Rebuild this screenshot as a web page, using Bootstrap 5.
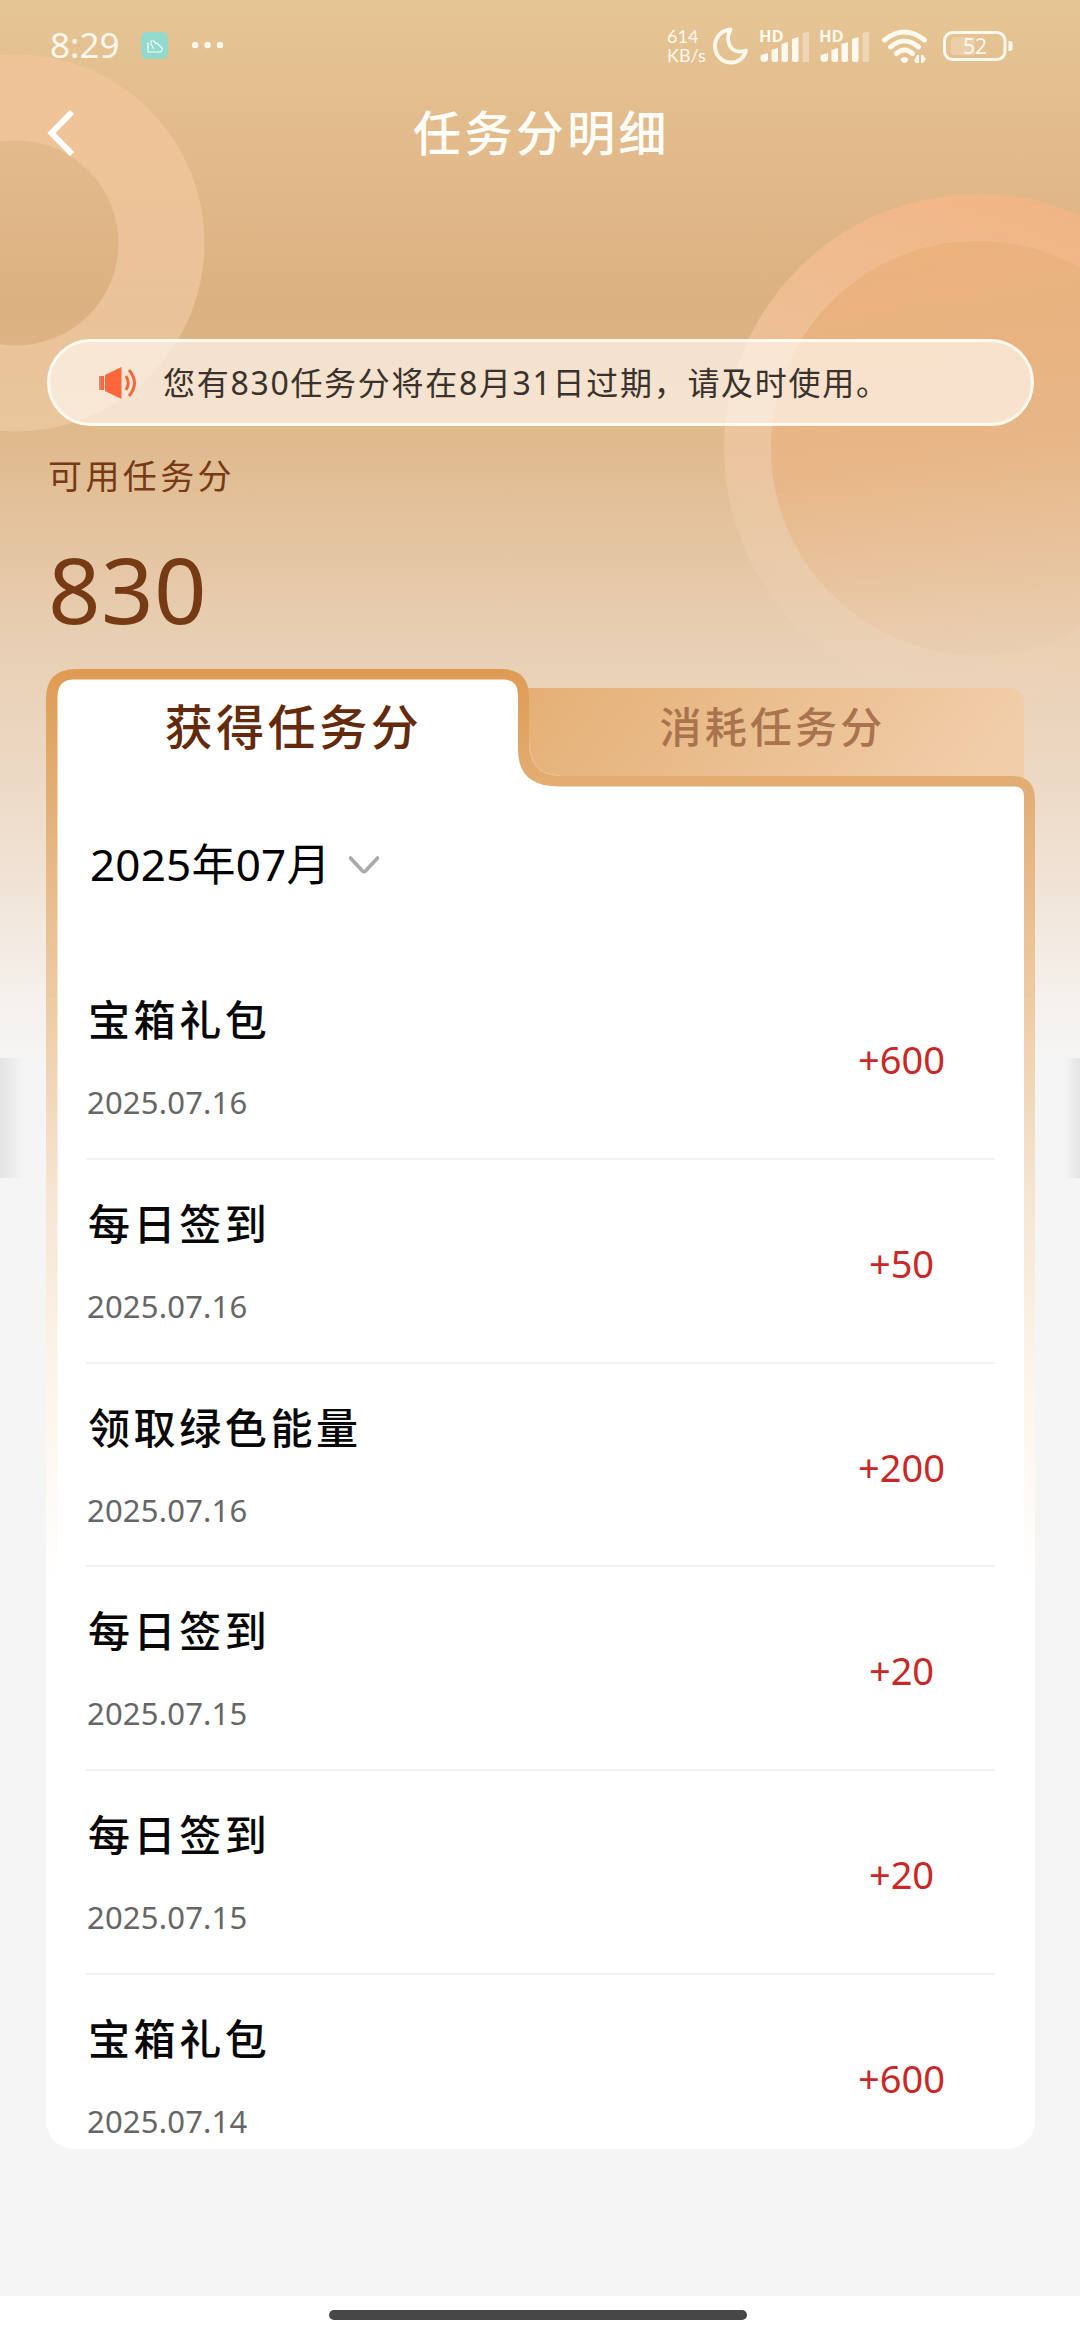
<!DOCTYPE html>
<html lang="zh-CN">
<head>
<meta charset="utf-8">
<meta name="viewport" content="width=device-width, initial-scale=1">
<title>任务分明细</title>
<link href="https://cdn.jsdelivr.net/npm/bootstrap@5.3.0/dist/css/bootstrap.min.css" rel="stylesheet">
<style>
body{font-family:"Noto Sans","Noto Sans CJK SC",sans-serif;background:#f5f5f5;width:1080px;height:2340px;overflow:hidden}
.screen{width:1080px;height:2340px;background:linear-gradient(180deg,#e6c595 0,#e2ba8b 150px,#dcb182 310px,#e0b98c 430px,#e4c4a0 540px,#e8cfb4 640px,#ebd6bf 740px,#f0e2d4 870px,#f5f0eb 990px,#f5f5f5 1060px)}
.decor{left:0;top:0;z-index:0}
.layer{z-index:1}
.statusbar{height:90px;padding:0 67px 0 50px;color:#fff9ee}
.clock{font-size:35px;line-height:90px;width:91px}
.netspeed{font-family:Lato,sans-serif;font-size:18px;line-height:19px;width:46px;padding-top:2px}
.titlebar{height:86px;padding-left:46px}
.titlebar h1{font-size:48px;letter-spacing:3.4px;line-height:60px;color:#fffdf8;font-weight:500;padding-right:73px}
.notice{margin:163px 46px 0 47px;height:87px;border:3.5px solid #fffaf0;border-radius:44px;background:rgba(255,248,240,.68);padding-left:49px;color:#3a322c;font-size:32px;letter-spacing:1.7px}
.notice span{margin-left:26px}
.points{padding-left:48px;color:#763a15;height:243px}
.points-label{font-size:34px;letter-spacing:3.4px;line-height:50px;padding-top:25px}
.points-value{font-size:92px;line-height:100px;margin-top:38px;letter-spacing:.4px}
.folder{margin:0 45px 0 46px;height:1480px;border-radius:0 0 28px 28px;overflow:hidden}
.folder-shape{left:0;top:0}
.tabs{height:115px}
.tabs button{background:none;border:0;padding:0;line-height:60px}
.tabs .tab-on{width:483px;font-size:48px;letter-spacing:3.5px;color:#632b0b;font-weight:500;padding-left:12px}
.tabs .tab-off{width:495px;font-size:42px;letter-spacing:3.2px;color:#a9744d;font-weight:500;padding-right:8px}
.month{height:172px;padding:50px 0 0 44px;font-size:44px;line-height:60px;color:#000;letter-spacing:.2px}
.entry{margin:0 40px;height:203.75px;border-bottom:2px solid #f2f2f2}
.entry:last-child{border:0}
.entry-name{font-size:42px;line-height:60px;letter-spacing:3.6px;color:#080808;font-weight:500;padding-top:34px;margin-left:2px}
.entry-date{font-size:31px;line-height:44px;color:#666;margin-top:30px;letter-spacing:.2px;margin-left:1px}
.entry-amount{width:187px;font-size:38px;line-height:60px;color:#ca2727;padding-top:73px}
.edge{top:1058px;height:120px;width:24px;z-index:1}
.edge-l{left:0;background:linear-gradient(90deg,#e4e4e4,rgba(245,245,245,0))}
.edge-r{right:0;width:16px;background:linear-gradient(270deg,#e4e4e4,rgba(245,245,245,0))}
.homebar{height:44px;padding-right:5px}
.homebar i{width:418px;height:10px;border-radius:5px;background:#474747;margin-top:14px}
</style>
<script src="https://cdn.jsdelivr.net/npm/bootstrap@5.3.0/dist/js/bootstrap.bundle.min.js"></script>
</head>
<body>
<div class="screen position-relative d-flex flex-column">
  <svg class="decor position-absolute" width="1080" height="720" viewBox="0 0 1080 720">
    <defs>
      <linearGradient id="ringL" x1="0" y1="0" x2="0" y2="1"><stop offset="0" stop-color="#f3c59b" stop-opacity=".75"/><stop offset="1" stop-color="#f1cfa8" stop-opacity=".6"/></linearGradient>
      <linearGradient id="ringR" gradientUnits="userSpaceOnUse" x1="1040" y1="200" x2="880" y2="700"><stop offset="0" stop-color="#f5b583" stop-opacity=".8"/><stop offset=".5" stop-color="#f4c8a4" stop-opacity=".7"/><stop offset="1" stop-color="#efd6ba" stop-opacity=".2"/></linearGradient>
      <linearGradient id="discR" gradientUnits="userSpaceOnUse" x1="930" y1="242" x2="1010" y2="660"><stop offset="0" stop-color="#edb27c" stop-opacity=".85"/><stop offset=".5" stop-color="#ebb584" stop-opacity=".7"/><stop offset="1" stop-color="#efc8a2" stop-opacity=".15"/></linearGradient>
    </defs>
    <circle cx="16" cy="243" r="145.5" fill="none" stroke="url(#ringL)" stroke-width="86"/>
    <circle cx="978" cy="448" r="230.5" fill="none" stroke="url(#ringR)" stroke-width="47"/>
    <circle cx="978" cy="448" r="207" fill="url(#discR)"/>
  </svg>

  <header class="layer position-relative">
    <div class="statusbar d-flex align-items-center">
      <span class="clock">8:29</span>
      <svg width="27" height="27" viewBox="0 0 27 27"><rect width="27" height="27" rx="6" fill="#93d9cd"/><path d="M7 20V13M7 20H19Q23 18 20 15L16 11L14 12M10 13V9H14M10 12L13 17M6 11L8 13M6 15H8M13 9L15 12" fill="none" stroke="#f2fff8" stroke-width="1.1"/></svg>
      <svg class="ms-4" width="32" height="8" viewBox="0 0 32 8" fill="#fff9ee"><circle cx="3.2" cy="4" r="3.2"/><circle cx="15.5" cy="4" r="3.2"/><circle cx="28" cy="4" r="3.2"/></svg>
      <div class="d-flex align-items-center ms-auto">
        <div class="netspeed"><div>614</div><div>KB/s</div></div>
        <svg width="300" height="44" viewBox="0 0 300 44" fill="none">
          <path d="M17.500 6.500C6 7.500 1.500 17 2 24C3 34 10 39.500 18 39.500C26 39.500 31.500 34 33 27.500C25 30 19 27.500 16.500 22C14.500 17 14.500 11.500 17.500 6.500Z" stroke="#fff9ee" stroke-width="3.800" stroke-linejoin="round"/>
          <g id="cell" fill="#fff9ee">
            <text x="46" y="19" font-family="Open Sans" font-size="16.500" font-weight="700">HD</text>
            <path d="M48 32L55 30V36Q55 39 51 39Q46 39 48 32ZM58.500 27L65 25V37Q65 39 62 39Q58.500 39 58.500 37ZM68.500 21L75 19V37Q75 39 72 39Q68.500 39 68.500 37ZM79 16L85.500 14V37Q85.500 39 82.500 39Q79 39 79 37Z"/>
            <path d="M89.500 10L96 8.500V39H89.500Z" opacity=".38"/>
          </g>
          <use href="#cell" x="60"/>
          <g stroke="#fff9ee" stroke-width="5" stroke-linecap="round">
            <path d="M171.500 17Q191.500 1 211.500 17"/><path d="M177.500 24Q191.500 12 205.500 24"/><path d="M183.500 30.500Q191.500 23.500 199.500 30.500"/>
          </g>
          <path d="M187.500 36Q191.500 32 195.500 36Q194 40 191.500 40Q189 40 187.500 36ZM201 38L204 32H206V40H203ZM208 32H210L213 36L210 40H208Z" fill="#fff9ee"/>
          <rect x="231.500" y="9.500" width="60.500" height="27" rx="8" stroke="#fff9ee" stroke-width="3"/>
          <path d="M242 14H262V32H242Q238 32 238 28V18Q238 14 242 14Z" fill="#fff9ee" opacity=".25"/>
          <path d="M295.500 18H297Q299.500 18 299.500 20V26Q299.500 28 297 28H295.500Z" fill="#fff9ee"/>
          <text x="250" y="31" font-family="Noto Sans" font-size="21" fill="#fff9ee">52</text>
        </svg>
      </div>
    </div>
    <nav class="titlebar d-flex align-items-center">
      <svg width="30" height="48" viewBox="0 0 30 48"><path d="M26 3L5.500 24L26 45" fill="none" stroke="#fff" stroke-width="6"/></svg>
      <h1 class="flex-fill text-center mb-0">任务分明细</h1>
    </nav>
  </header>

  <main class="layer position-relative">
    <section class="notice d-flex align-items-center">
      <svg width="38" height="34" viewBox="0 0 38 34"><path d="M0 10H5V24H0ZM6 9L22.500 1V33L6 25Z" fill="#ff663c"/><path d="M1 10V24" stroke="#d98778" stroke-width="2"/><path d="M27 10Q31.500 17 27 24M30 4Q41 17 30 30" fill="none" stroke="#f0693e" stroke-width="3"/></svg>
      <span>您有830任务分将在8月31日过期，请及时使用。</span>
    </section>
    <section class="points">
      <div class="points-label">可用任务分</div>
      <div class="points-value">830</div>
    </section>

    <section class="folder position-relative">
      <svg class="folder-shape position-absolute" width="989" height="1480" viewBox="0 0 989 1480">
        <defs>
          <linearGradient id="rim" x1="0" y1="0" x2="0" y2="1"><stop offset="0" stop-color="#df9b54"/><stop offset=".075" stop-color="#e2ac72"/><stop offset=".22" stop-color="#edcba2"/><stop offset=".36" stop-color="#f6e6d4"/><stop offset=".48" stop-color="#fcf5ea"/><stop offset=".62" stop-color="#fff"/></linearGradient>
          <linearGradient id="offTab" x1="0" y1="0" x2="1" y2=".15"><stop offset="0" stop-color="#e4af74"/><stop offset="1" stop-color="#f1cda9"/></linearGradient>
        </defs>
        <path d="M470 19H962Q978 19 978 35V125H470Z" fill="url(#offTab)"/>
        <path d="M0 1480V30Q0 0 30 0H455Q483 0 483 28V76Q483 107 515 107H966Q989 107 989 131V1480Z" fill="url(#rim)"/>
        <path d="M11.500 1480V28Q11.500 10.500 28 10.500H457Q472 10.500 472 26V81Q472 117.500 513 117.500H968Q978 117.500 978 128V1480Z" fill="#fff"/>
        <path d="M483.500 74Q484 106.500 515 106.500" fill="none" stroke="#edc392" stroke-width="1"/>
      </svg>
      <div class="tabs position-relative d-flex align-items-center">
        <button class="tab-on">获得任务分</button>
        <button class="tab-off">消耗任务分</button>
      </div>
      <div class="month position-relative d-flex align-items-start">
        <span>2025年07月</span>
        <svg class="ms-3" width="34" height="60" viewBox="0 0 34 60"><path d="M3.500 24L15 36.500Q17 39 19 36.500L30.500 24" fill="none" stroke="#aaa" stroke-width="3.600" stroke-linecap="round"/></svg>
      </div>
      <div class="position-relative">
        <article class="entry d-flex justify-content-between"><div><div class="entry-name">宝箱礼包</div><div class="entry-date">2025.07.16</div></div><div class="entry-amount text-center">+600</div></article>
        <article class="entry d-flex justify-content-between"><div><div class="entry-name">每日签到</div><div class="entry-date">2025.07.16</div></div><div class="entry-amount text-center">+50</div></article>
        <article class="entry d-flex justify-content-between"><div><div class="entry-name">领取绿色能量</div><div class="entry-date">2025.07.16</div></div><div class="entry-amount text-center">+200</div></article>
        <article class="entry d-flex justify-content-between"><div><div class="entry-name">每日签到</div><div class="entry-date">2025.07.15</div></div><div class="entry-amount text-center">+20</div></article>
        <article class="entry d-flex justify-content-between"><div><div class="entry-name">每日签到</div><div class="entry-date">2025.07.15</div></div><div class="entry-amount text-center">+20</div></article>
        <article class="entry d-flex justify-content-between"><div><div class="entry-name">宝箱礼包</div><div class="entry-date">2025.07.14</div></div><div class="entry-amount text-center">+600</div></article>
      </div>
    </section>
  </main>
  <div class="edge edge-l position-absolute"></div>
  <div class="edge edge-r position-absolute"></div>
  <footer class="homebar bg-white mt-auto d-flex justify-content-center align-items-start"><i></i></footer>
</div>
</body>
</html>
